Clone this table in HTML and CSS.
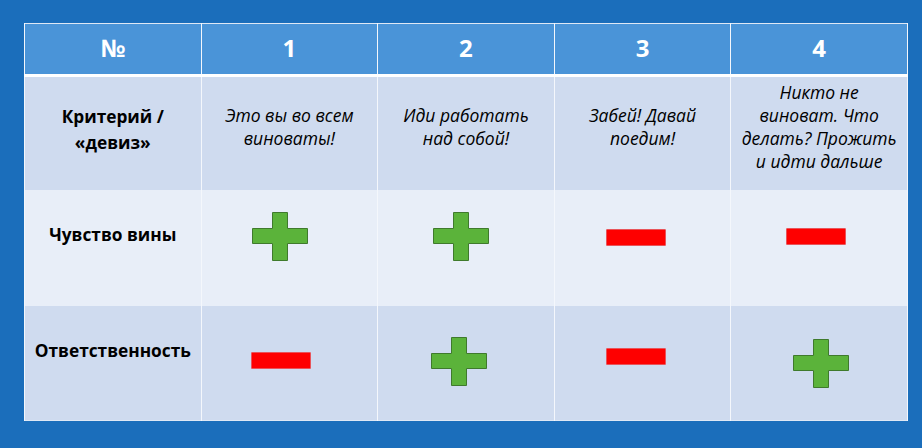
FILE: index.html
```html
<!DOCTYPE html>
<html lang="ru">
<head>
<meta charset="utf-8">
<title>Критерии</title>
<link rel="stylesheet" href="styles.css">
</head>
<body>
<svg class="defs" width="0" height="0" aria-hidden="true">
  <defs>
    <symbol id="plus" viewBox="0 0 56 49">
      <polygon points="20.5,0.5 35.5,0.5 35.5,16.5 55.5,16.5 55.5,31.5 35.5,31.5 35.5,48.5 20.5,48.5 20.5,31.5 0.5,31.5 0.5,16.5 20.5,16.5" fill="#5bb33a" stroke="#3f7a2c" stroke-width="1"/>
    </symbol>
  </defs>
</svg>
<main class="slide">
  <table class="grid">
    <colgroup>
      <col class="c"><col class="c"><col class="c"><col class="c"><col class="c">
    </colgroup>
    <thead>
      <tr class="head">
        <th>№</th><th>1</th><th>2</th><th>3</th><th>4</th>
      </tr>
    </thead>
    <tbody>
      <tr class="row motto">
        <td class="label label-motto">Критерий /<br>«девиз»</td>
        <td class="quote">Это вы во всем<br>виноваты!</td>
        <td class="quote">Иди работать<br>над собой!</td>
        <td class="quote">Забей! Давай<br>поедим!</td>
        <td class="quote">Никто не<br>виноват. Что<br>делать? Прожить<br>и идти дальше</td>
      </tr>
      <tr class="row light">
        <td class="label">Чувство вины</td>
        <td class="mark"><svg class="plus p-a"><use href="#plus"/></svg></td>
        <td class="mark"><svg class="plus p-b"><use href="#plus"/></svg></td>
        <td class="mark"><div class="minus m-a"></div></td>
        <td class="mark"><div class="minus m-b"></div></td>
      </tr>
      <tr class="row">
        <td class="label">Ответственность</td>
        <td class="mark"><div class="minus m-c"></div></td>
        <td class="mark"><svg class="plus p-c"><use href="#plus"/></svg></td>
        <td class="mark"><div class="minus m-d"></div></td>
        <td class="mark"><svg class="plus p-d"><use href="#plus"/></svg></td>
      </tr>
    </tbody>
  </table>
</main>
</body>
</html>
```
FILE: styles.css
```css
html, body {
  margin: 0;
  padding: 0;
}
body {
  background: #1b6ebb;
  width: 922px;
  height: 448px;
  overflow: hidden;
  font-family: "Open Sans", "Noto Sans", sans-serif;
  color: #000;
}
.defs {
  position: absolute;
}
.slide {
  padding: 23px 0 0 24px;
}
.grid {
  table-layout: fixed;
  border-collapse: collapse;
  width: 883px;
  border: 1px solid #dfe8f5;
}
.c {
  width: 176.6px;
}
.grid th,
.grid td {
  box-sizing: border-box;
  padding: 0;
  border-left: 1px solid #f4f7fc;
  border-right: 1px solid #f4f7fc;
  text-align: center;
}
.head th {
  background: #4a94d8;
  color: #fff;
  font-weight: 700;
  font-size: 24px;
  height: 52px;
  line-height: 30px;
  padding-bottom: 2px;
  border-bottom: 3px solid #fff;
}
.row td {
  background: #cfdbef;
  height: 115px;
}
.row.light td {
  background: #e8eef8;
  height: 116px;
}
.motto td {
  vertical-align: middle;
  padding-bottom: 12px;
  height: 114px;
}
.quote {
  font-style: italic;
  font-size: 17.5px;
  line-height: 23px;
}
.grid .label {
  font-weight: 700;
  font-size: 17.3px;
  line-height: 26px;
  vertical-align: top;
  padding-top: 32px;
}
.grid .label-motto {
  vertical-align: middle;
  padding-top: 6px;
  padding-bottom: 12px;
}
.mark {
  vertical-align: top;
  text-align: left;
}
.plus {
  display: block;
  width: 56px;
  height: 49px;
}
.minus {
  width: 58px;
  height: 15px;
  background: #fe0000;
  border: 1px solid #e8545a;
  border-radius: 1px;
}
.p-a { margin: 22px 0 0 50px; }
.p-b { margin: 22px 0 0 55px; }
.p-c { margin: 31px 0 0 53px; }
.p-d { margin: 33px 0 0 62px; }
.m-a { margin: 39px 0 0 51px; }
.m-b { margin: 38px 0 0 55px; }
.m-c { margin: 46px 0 0 49px; }
.m-d { margin: 42px 0 0 51px; }
```
